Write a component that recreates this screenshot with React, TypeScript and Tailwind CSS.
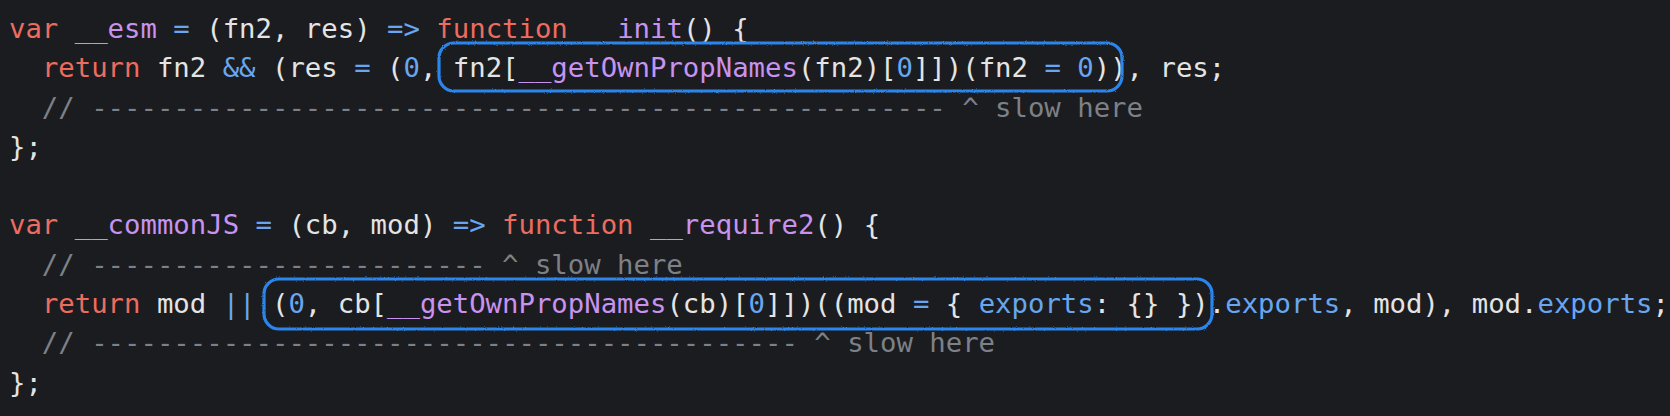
type Tok = [string, string];

const C = {
  kw: "text-[#ec6d5f]",
  fn: "text-[#c893ef]",
  op: "text-[#68a7f0]",
  tx: "text-[#e4e4e4]",
  cm: "text-[#7d8187]",
};

const dashes = (n: number) => "-".repeat(n);

// each line is a list of [text, colour class]
const LINES: Tok[][] = [
  [
    ["var ", C.kw],
    ["__esm", C.fn],
    [" ", C.tx],
    ["=", C.op],
    [" (fn2, res) ", C.tx],
    ["=>", C.op],
    [" ", C.tx],
    ["function", C.kw],
    ["   ", C.tx],
    ["init", C.fn],
    ["() {", C.tx],
  ],
  [
    ["  ", C.tx],
    ["return", C.kw],
    [" fn2 ", C.tx],
    ["&&", C.op],
    [" (res ", C.tx],
    ["=", C.op],
    [" (", C.tx],
    ["0", C.op],
    [", fn2[", C.tx],
    ["__getOwnPropNames", C.fn],
    ["(fn2)[", C.tx],
    ["0", C.op],
    ["]])(fn2 ", C.tx],
    ["=", C.op],
    [" ", C.tx],
    ["0", C.op],
    [")), res;", C.tx],
  ],
  [["  // " + dashes(52) + " ^ slow here", C.cm]],
  [["};", C.tx]],
  [[" ", C.tx]],
  [
    ["var ", C.kw],
    ["__commonJS", C.fn],
    [" ", C.tx],
    ["=", C.op],
    [" (cb, mod) ", C.tx],
    ["=>", C.op],
    [" ", C.tx],
    ["function", C.kw],
    [" ", C.tx],
    ["__require2", C.fn],
    ["() {", C.tx],
  ],
  [["  // " + dashes(24) + " ^ slow here", C.cm]],
  [
    ["  ", C.tx],
    ["return", C.kw],
    [" mod ", C.tx],
    ["||", C.op],
    [" (", C.tx],
    ["0", C.op],
    [", cb[", C.tx],
    ["__getOwnPropNames", C.fn],
    ["(cb)[", C.tx],
    ["0", C.op],
    ["]])((mod ", C.tx],
    ["=", C.op],
    [" { ", C.tx],
    ["exports", C.op],
    [": {} }).", C.tx],
    ["exports", C.op],
    [", mod), mod.", C.tx],
    ["exports", C.op],
    [";", C.tx],
  ],
  [["  // " + dashes(43) + " ^ slow here", C.cm]],
  [["};", C.tx]],
];

// hand-drawn style highlight rings
const RINGS = [
  { x: 439, y: 43, w: 683, h: 48 },
  { x: 264, y: 279, w: 948, h: 50 },
];

function Rings() {
  return (
    <svg
      className="pointer-events-none absolute inset-0"
      width="1670"
      height="416"
      viewBox="0 0 1670 416"
    >
      <defs>
        <filter id="rough" x="-5%" y="-20%" width="110%" height="140%">
          <feTurbulence type="fractalNoise" baseFrequency="0.9" numOctaves="2" seed="3" />
          <feDisplacementMap in="SourceGraphic" scale="2.2" />
        </filter>
      </defs>
      {RINGS.map((r, i) => (
        <rect
          key={i}
          x={r.x}
          y={r.y}
          width={r.w}
          height={r.h}
          rx="15"
          ry="15"
          fill="none"
          stroke="#2a85ec"
          strokeWidth="3.2"
          filter="url(#rough)"
        />
      ))}
    </svg>
  );
}

export default function App() {
  return (
    <div className="relative h-[416px] w-[1670px] overflow-hidden bg-[#1b1c20]">
      <div className="flex flex-col pl-[9px] pt-[9px] font-['DejaVu_Sans_Mono',monospace] text-[27.3px] leading-[39.3px] whitespace-pre">
        {LINES.map((line, i) => (
          <div key={i}>
            {line.map(([t, c], j) => (
              <span key={j} className={c}>
                {t}
              </span>
            ))}
          </div>
        ))}
      </div>
      <Rings />
    </div>
  );
}
